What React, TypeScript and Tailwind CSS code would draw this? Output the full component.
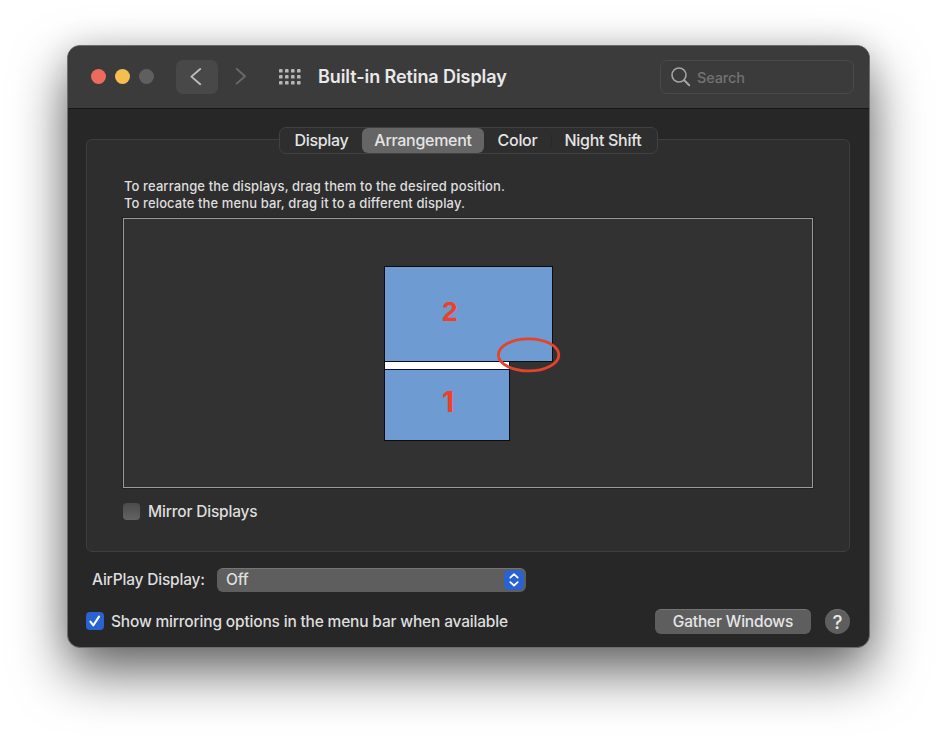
import React from "react";

function Toolbar() {
  return (
    <header className="flex h-[63px] shrink-0 items-start border-b border-[#161616] bg-[#3b3b3b] pl-[23px]">
      <div className="mt-[23px] flex gap-[9px]">
        <span className="size-[15px] rounded-full bg-[#ed6a5e]" />
        <span className="size-[15px] rounded-full bg-[#f5bf4f]" />
        <span className="size-[15px] rounded-full bg-[#5f5f5f]" />
      </div>
      <button className="mt-[14px] ml-[22px] flex h-[34px] w-[42px] items-center justify-center rounded-[7px] bg-[#484848]">
        <svg width="12" height="18" viewBox="0 0 12 18" fill="none" className="mr-[2px]">
          <path d="M10.2 1 L1.4 8.6 L10.2 16.2" stroke="#bdbdbd" strokeWidth="1.9" strokeLinecap="round" strokeLinejoin="round" />
        </svg>
      </button>
      <svg width="12" height="18" viewBox="0 0 12 18" fill="none" className="mt-[21px] ml-[17px]">
        <path d="M1.6 1.8 L10 9.2 L1.6 16.6" stroke="#696969" strokeWidth="1.9" strokeLinecap="round" strokeLinejoin="round" />
      </svg>
      <svg width="22" height="16" viewBox="0 0 22 16" className="mt-[23px] ml-[32px]">
        {[0, 6, 12, 18].map((x) =>
          [0, 6, 12].map((y) => <rect key={`${x}-${y}`} x={x} y={y} width="3.6" height="3.6" rx="0.9" fill="#b6b6b6" />)
        )}
      </svg>
      <h1 className="mt-[19px] ml-[17px] w-[342px] text-[18px] leading-[24px] font-semibold tracking-[-0.08px] whitespace-nowrap text-[#e9e9e9]">
        Built-in Retina Display
      </h1>
      <div className="mt-[14px] flex h-[34px] w-[194px] items-center rounded-[7px] border border-[#4a4a4a] pl-[10px]">
        <svg width="20" height="20" viewBox="0 0 20 20" fill="none" className="shrink-0">
          <circle cx="8" cy="8" r="7" stroke="#a5a5a5" strokeWidth="1.6" />
          <path d="M13.2 13.2 L18.2 18.2" stroke="#a5a5a5" strokeWidth="2" strokeLinecap="round" />
        </svg>
        <span className="mt-[2px] ml-[6px] text-[14.5px] leading-[20px] tracking-[-0.15px] text-[#727272]">Search</span>
      </div>
    </header>
  );
}

function Tabs() {
  return (
    <nav className="relative mt-[18px] ml-[211px] flex h-[27px] w-[379px] shrink-0 rounded-[7px] border border-[#414141] bg-[#2e2e2e] text-[16px] leading-[24px] tracking-[-0.3px] text-[#e4e4e4]">
      <span className="w-[82px] pl-px text-center">Display</span>
      <span className="h-[25px] w-[122px] rounded-[6px] bg-[#656565] text-center">Arrangement</span>
      <span className="w-[67px] text-center">Color</span>
      <span className="my-[6px] w-px bg-[#292929]" />
      <span className="w-[102px] text-center">Night Shift</span>
    </nav>
  );
}

function Displays() {
  return (
    <div className="relative mt-[6px] h-[270px] w-[690px] border border-[#9b9b9b] bg-[#323232] outline outline-[#1b1b1b]/60">
      <div className="absolute top-[47px] left-[260px] h-[96px] w-[169px] border border-[#0b0b12] bg-[#6e9bd1]" />
      <div className="absolute top-[142px] left-[260px] h-[80px] w-[126px] border border-[#0b0b12] bg-[#6e9bd1]">
        <div className="h-[8px] border-b border-[#0c1040] bg-white" />
      </div>
      <span className="absolute top-[76px] left-[318px] text-[28px] leading-[34px] font-bold text-[#ee4127] [font-family:'Liberation_Sans',sans-serif]">2</span>
      <span className="absolute top-[166px] left-[318px] text-[28px] leading-[34px] font-bold text-[#ee4127]">1</span>
      <svg className="absolute top-[117px] left-[372px]" width="66" height="38" viewBox="0 0 66 38" fill="none">
        <ellipse cx="32.6" cy="18.9" rx="30.2" ry="16" stroke="#e5432a" strokeWidth="2.8" />
      </svg>
    </div>
  );
}

export default function App() {
  return (
    <div className="h-[736px] w-[936px] overflow-hidden bg-white pt-[45px] pl-[67px] font-[450] antialiased [font-family:Inter,'Liberation_Sans',sans-serif]">
      <div className="flex h-[603px] w-[803px] flex-col overflow-hidden rounded-[13px] border border-[#6c6c6c] bg-[#272727] shadow-[0_24px_54px_rgba(0,0,0,0.6),0_0_30px_rgba(0,0,0,0.1)]">
        <Toolbar />
        <Tabs />
        <section className="-mt-[15px] ml-[18px] h-[413px] w-[764px] shrink-0 rounded-[6px] border border-[#3e3e3e] bg-[#2e2e2e] pt-[38px] pl-[36px]">
          <p className="pl-px text-[13px] leading-[17px] tracking-[0.11px] whitespace-nowrap text-[#dedede]">
            To rearrange the displays, drag them to the desired position.
            <br />
            To relocate the menu bar, drag it to a different display.
          </p>
          <Displays />
          <label className="mt-[12px] flex items-center">
            <span className="size-[17px] rounded-[4px] bg-linear-to-b from-[#4b4b4b] to-[#636363]" />
            <span className="mt-[2px] ml-[8px] text-[15.5px] leading-[20px] tracking-[-0.18px] text-[#dedede]">Mirror Displays</span>
          </label>
        </section>
        <div className="mt-[16px] ml-[24px] flex h-[24px] shrink-0 items-center text-[15.5px] tracking-[-0.18px] text-[#dedede]">
          <span className="w-[125px] whitespace-nowrap">AirPlay Display:</span>
          <div className="flex h-[24px] w-[309px] items-center justify-between rounded-[6px] border-t border-[#757575] bg-[#5e5e5e] pr-[2px] pl-[9px]">
            <span className="-mt-[2px]">Off</span>
            <span className="-mt-px flex h-[20px] w-[20px] items-center justify-center rounded-[5px] bg-[#2b62d2]">
              <svg width="12" height="16" viewBox="0 0 12 16" fill="none" stroke="#fff" strokeWidth="1.8" strokeLinecap="round" strokeLinejoin="round">
                <path d="M2.3 5.6 L6 2.2 L9.7 5.6 M2.3 10.1 L6 13.5 L9.7 10.1" />
              </svg>
            </span>
          </div>
        </div>
        <footer className="mt-[17px] ml-[18px] flex h-[25px] w-[764px] shrink-0 items-center text-[15.5px] tracking-[-0.18px] text-[#dedede]">
          <span className="-mt-px flex size-[18px] items-center justify-center rounded-[4px] bg-[#2b62d2]">
            <svg width="14" height="14" viewBox="0 0 14 14" fill="none">
              <path d="M2.4 7.6 L5.4 11.3 L11 2.6" stroke="#fff" strokeWidth="2.1" strokeLinecap="round" strokeLinejoin="round" />
            </svg>
          </span>
          <span className="ml-[7px] whitespace-nowrap">Show mirroring options in the menu bar when available</span>
          <button className="ml-auto h-[25px] w-[156px] rounded-[6px] border-t border-[#757575] bg-[#5e5e5e] pb-[2px] leading-[21px] text-[#e6e6e6]">Gather Windows</button>
          <button className="ml-[14px] size-[25px] rounded-full border-t border-[#757575] bg-[#5e5e5e] text-[19px] leading-[23px] text-[#e6e6e6]">?</button>
        </footer>
      </div>
    </div>
  );
}
